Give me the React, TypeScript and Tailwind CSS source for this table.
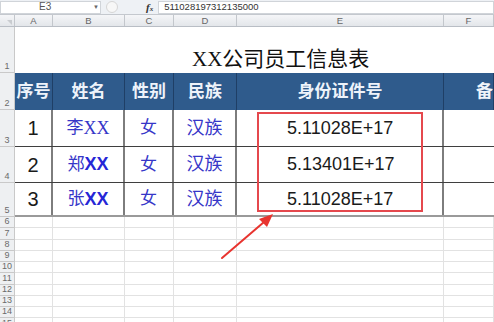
const cols = [38, 72, 49, 63, 207, 50];
const letters = ["A", "B", "C", "D", "E", "F"];

const rows = [
  { n: "1", name: "李", serifX: true, id: "5.11028E+17", h: 37, label: "3" },
  { n: "2", name: "郑", serifX: false, id: "5.13401E+17", h: 36, label: "4" },
  { n: "3", name: "张", serifX: false, id: "5.11028E+17", h: 34, label: "5" },
];

const heads = ["序号", "姓名", "性别", "民族", "身份证件号", "备"];

const blue = "text-[#3636c8]";

function RowLabel({ label, h }: { label: string; h: number }) {
  return (
    <div
      className="flex w-[15px] shrink-0 items-end justify-center border-r border-b border-[#c9c9c9] bg-[#eef0f2] pb-[1px] text-[9px] leading-none text-[#6b6b6b]"
      style={{ height: h }}
    >
      {label}
    </div>
  );
}

export default function App() {
  return (
    <div className="relative h-[322px] w-[494px] overflow-hidden bg-white font-['Liberation_Sans','Noto_Sans_CJK_SC',sans-serif]">
      {/* formula bar */}
      <div className="flex h-[15px] items-center border-b border-[#c4c8ce] bg-[#eef1f5]">
        <div className="flex h-[13px] w-[101px] items-center border border-[#d0d4d9] bg-white">
          <span className="ml-[38px] w-[22px] text-[10px] leading-none text-[#555]">E3</span>
          <span className="ml-[32px] text-[6px] text-[#666]">▼</span>
        </div>
        <div className="ml-[5px] h-[12px] w-[12px] rounded-full border border-[#d6d6d6] bg-[#f7f7f7]" />
        <span className="ml-[28px] font-['Liberation_Serif',serif] text-[11px] font-bold italic leading-none text-[#333]">
          f<span className="text-[7px]">x</span>
        </span>
        <div className="ml-[5px] flex h-[13px] flex-1 items-center border border-[#d0d4d9] bg-white pl-[5px] text-[9.5px] leading-none text-[#333]">
          511028197312135000
        </div>
      </div>

      {/* column headers */}
      <div className="flex h-[12px] border-b border-[#b9bec5] bg-gradient-to-b from-[#f5f6f8] to-[#e3e6ea]">
        <div className="relative w-[15px] shrink-0 border-r border-[#c3c7cc]">
          <div className="absolute right-[2px] bottom-[1px] h-0 w-0 border-l-[5px] border-t-[5px] border-l-transparent border-t-[#c9ccd0]" />
        </div>
        {cols.map((w, i) => (
          <div
            key={i}
            className="flex shrink-0 items-center justify-center border-r border-[#c3c7cc] text-[9.5px] leading-none text-[#666]"
            style={{ width: w }}
          >
            {letters[i]}
          </div>
        ))}
      </div>

      {/* row 1: title */}
      <div className="flex h-[46px]">
        <RowLabel label="1" h={46} />
        <div className="flex flex-1 items-end pb-[3px] pl-[177px] font-['Liberation_Serif','Noto_Sans_CJK_SC',serif] text-[21px] leading-none text-[#111]">
          XX公司员工信息表
        </div>
      </div>

      {/* row 2: header */}
      <div className="flex h-[37px]">
        <RowLabel label="2" h={37} />
        {cols.map((w, i) => (
          <div
            key={i}
            className={`flex shrink-0 items-center overflow-hidden whitespace-nowrap border-r border-[#1f3f66] bg-[#2f5b8c] text-[17px] font-bold text-[#eef3fa] ${i === 5 ? "justify-start pl-[32px]" : "justify-center"}`}
            style={{ width: w }}
          >
            {heads[i]}
          </div>
        ))}
      </div>

      {/* data rows */}
      {rows.map((r, ri) => (
        <div key={ri} className="flex" style={{ height: r.h }}>
          <RowLabel label={r.label} h={r.h} />
          <div
            className={`flex flex-1 ${ri < 2 ? "border-b border-[#3f3f3f]" : "border-b-2 border-[#9a9a9a]"}`}
          >
            <div className="flex w-[38px] shrink-0 items-center justify-center border-r-2 border-[#7d7d7d] text-[20px] text-[#1a1a1a]">
              {r.n}
            </div>
            <div className={`flex w-[72px] shrink-0 items-center justify-center border-r-2 border-[#7d7d7d] text-[17px] ${blue}`}>
              {r.name}
              {r.serifX ? (
                <span className="font-['Liberation_Serif',serif] text-[18px]">XX</span>
              ) : (
                <span className="text-[18px] font-bold text-[#2626d6]">XX</span>
              )}
            </div>
            <div className={`flex w-[49px] shrink-0 items-center justify-center border-r-2 border-[#7d7d7d] text-[17px] ${blue}`}>
              女
            </div>
            <div className={`flex w-[63px] shrink-0 items-center justify-center border-r-2 border-[#7d7d7d] text-[18px] ${blue}`}>
              汉族
            </div>
            <div className="flex w-[207px] shrink-0 items-center pl-[50px] border-r-2 border-[#7d7d7d] text-[18px] text-[#1a1a1a]">
              {r.id}
            </div>
            <div className="w-[50px] shrink-0" />
          </div>
        </div>
      ))}

      {/* empty rows */}
      {Array.from({ length: 10 }, (_, i) => (
        <div key={i} className="flex h-[11.25px]">
          <RowLabel label={String(i + 6)} h={11.25} />
          {cols.map((w, ci) => (
            <div
              key={ci}
              className="shrink-0 border-r border-b border-[#e2e2e2]"
              style={{ width: w }}
            />
          ))}
        </div>
      ))}

      {/* annotation: red box */}
      <div className="absolute left-[257px] top-[112px] h-[100px] w-[166px] border-2 border-[#e5484d]" />

      {/* annotation: arrow */}
      <svg className="absolute left-0 top-0" width="494" height="322" viewBox="0 0 494 322">
        <line x1="222" y1="258" x2="264" y2="222" stroke="#e8342f" strokeWidth="2" strokeLinecap="round" />
        <polygon points="273,214 259,219 267,227" fill="#e8342f" />
      </svg>
    </div>
  );
}
